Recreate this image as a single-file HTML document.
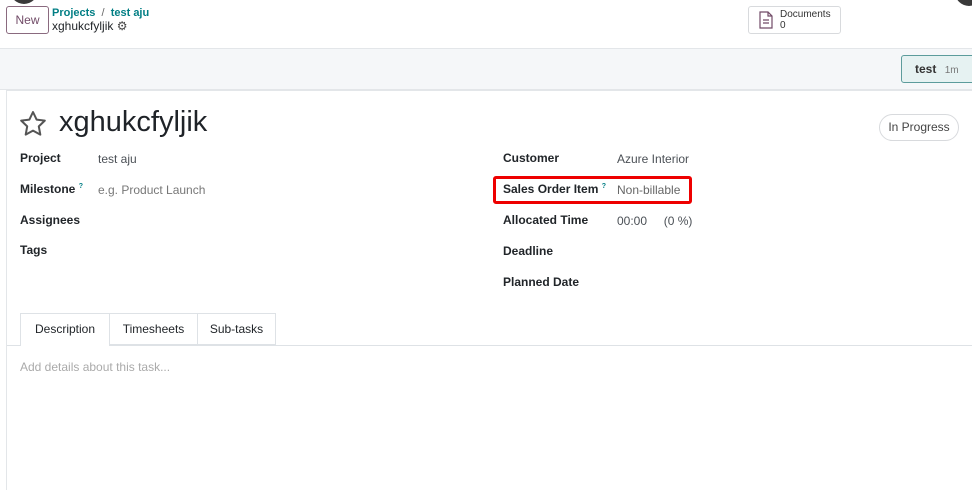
<!DOCTYPE html>
<html><head><style>
*{box-sizing:border-box;margin:0;padding:0}
body{width:972px;height:480px;overflow:hidden;background:#fff;font-family:"Liberation Sans","DejaVu Sans",sans-serif;color:#212529;position:relative;font-size:12px}
.a{position:absolute;white-space:nowrap}
.lbl{font-weight:bold;font-size:12px;color:#212529}
.val{font-size:12px;color:#4b5056}
</style></head><body>
<div class="a" style="left:10px;top:-24px;width:28px;height:28px;border-radius:50%;background:#3a3a3a"></div>
<div class="a" style="left:955px;top:-22px;width:28px;height:28px;border-radius:50%;background:#3a3a3a"></div>
<div class="a" style="left:6px;top:6px;width:43px;height:28px;border:1px solid #8a6a7f;border-radius:3px;color:#714b67;font-size:12px;line-height:26px;text-align:center">New</div>
<div class="a" style="left:52px;top:7px;font-size:11px;color:#017e84;font-weight:bold">Projects <span style="color:#666;font-weight:normal">&nbsp;/&nbsp;</span> test aju</div>
<div class="a" style="left:52px;top:19px;font-size:12px;color:#212529">xghukcfyljik <span style="color:#444">⚙</span></div>
<div class="a" style="left:748px;top:6px;width:93px;height:28px;border:1px solid #d8dadd;border-radius:3px"></div>
<svg class="a" style="left:758px;top:11px" width="16" height="18" viewBox="0 0 16 18"><path d="M2 1h8l4 4v12H2z M10 1v4h4 M5 9h6 M5 12h6" fill="none" stroke="#714b67" stroke-width="1.2"/></svg>
<div class="a" style="left:780px;top:9px;font-size:10px;line-height:11px;color:#333">Documents<br>0</div>
<div class="a" style="left:0;top:48px;width:972px;height:42px;background:#f5f7f9;border-top:1px solid #e3e6e9;border-bottom:1px solid #e3e6e9"></div>
<div class="a" style="left:901px;top:55px;width:75px;height:28px;background:#e6f2f2;border:1px solid #5c9c9c;border-radius:3px;font-size:12px;line-height:26px;padding-left:13px;font-weight:bold;color:#333">test <span style="font-weight:normal;font-size:10px;color:#777;margin-left:5px">1m</span></div>
<div class="a" style="left:6px;top:90px;width:972px;height:400px;background:#fff;border-left:1px solid #e3e6e9;border-top:1px solid #e3e6e9"></div>
<svg class="a" style="left:19px;top:110px" width="28" height="27" viewBox="0 0 28 27"><path d="M14 2l3.6 7.6 8.2 1-6 5.8 1.5 8.2L14 20.6l-7.3 4 1.5-8.2-6-5.8 8.2-1z" fill="none" stroke="#555" stroke-width="2" stroke-linejoin="round"/></svg>
<div class="a" style="left:59px;top:106px;font-size:29px;color:#1f2328">xghukcfyljik</div>
<div class="a" style="left:879px;top:114px;width:80px;height:27px;border:1px solid #d8dadd;border-radius:14px;font-size:12px;line-height:25px;text-align:center;color:#444">In Progress</div>
<div class="a lbl" style="left:20px;top:151px">Project</div><div class="a val" style="left:98px;top:152px">test aju</div>
<div class="a lbl" style="left:20px;top:182px">Milestone <sup style="font-size:7px;color:#017e84">?</sup></div><div class="a val" style="left:98px;top:183px;color:#777">e.g. Product Launch</div>
<div class="a lbl" style="left:20px;top:213px">Assignees</div>
<div class="a lbl" style="left:20px;top:243px">Tags</div>
<div class="a lbl" style="left:503px;top:151px">Customer</div><div class="a val" style="left:617px;top:152px">Azure Interior</div>
<div class="a" style="left:493px;top:176px;width:199px;height:28px;border:3px solid #e00;border-radius:3px"></div>
<div class="a lbl" style="left:503px;top:182px">Sales Order Item <sup style="font-size:7px;color:#017e84">?</sup></div><div class="a val" style="left:617px;top:183px;color:#666">Non-billable</div>
<div class="a lbl" style="left:503px;top:213px">Allocated Time</div><div class="a val" style="left:617px;top:214px">00:00 &nbsp;&nbsp;&nbsp;&nbsp;(0 %)</div>
<div class="a lbl" style="left:503px;top:244px">Deadline</div>
<div class="a lbl" style="left:503px;top:275px">Planned Date</div>
<div class="a" style="left:7px;top:345px;width:965px;height:1px;background:#dee2e6"></div>
<div class="a" style="left:20px;top:313px;width:90px;height:33px;border:1px solid #dee2e6;border-bottom:none;background:#fff;font-size:12px;line-height:31px;text-align:center">Description</div>
<div class="a" style="left:110px;top:313px;width:88px;height:32px;border:1px solid #dee2e6;border-left:none;font-size:12px;line-height:31px;text-align:center">Timesheets</div>
<div class="a" style="left:198px;top:313px;width:78px;height:32px;border:1px solid #dee2e6;border-left:none;font-size:12px;line-height:31px;text-align:center">Sub-tasks</div>
<div class="a" style="left:20px;top:360px;font-size:12px;color:#aaa">Add details about this task...</div>
</body></html>
